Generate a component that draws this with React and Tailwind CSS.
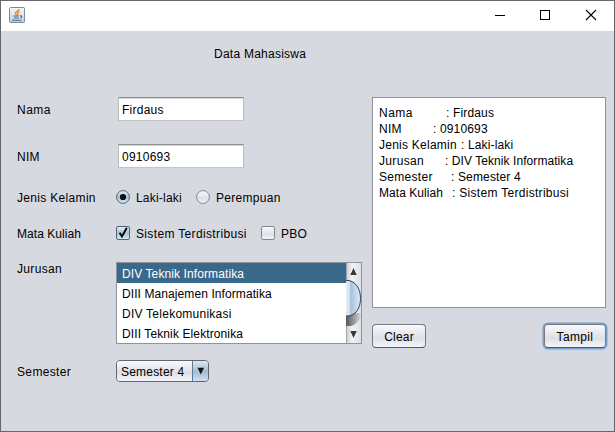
import React from "react";

function JavaIcon() {
  return (
    <svg width="16" height="16" viewBox="0 0 16 16" className="-mt-0.5 block">
      <defs>
        <linearGradient id="javaBg" x1="0" y1="0" x2="0" y2="1">
          <stop offset="0" stopColor="#f6f7f8" />
          <stop offset="1" stopColor="#c3ccd4" />
        </linearGradient>
      </defs>
      <rect x="0.5" y="0.5" width="15" height="15" rx="1" fill="url(#javaBg)" stroke="#7b8a99" />
      <path d="M10.200 2C10 3.800 6.200 4.500 6.500 6.300c.2.800 1.100 1 1 1.900M10.600 4.400C9 5 8.200 5.800 8.800 6.600c.4.600.1 1-.3 1.500" fill="none" stroke="#e8862e" strokeWidth="1.300" />
      <path d="M4.500 9h5.500M5 11h4.800M3 13.200h9.500M11 8.800c2.300-.4 2.300 1.500.2 2.200" fill="none" stroke="#456f94" strokeWidth="1.100" />
    </svg>
  );
}

function TitleBar() {
  return (
    <header className="flex h-[30px] shrink-0 items-center justify-between bg-white pl-2 pr-px">
      <JavaIcon />
      <div className="flex h-full">
        <svg width="46" height="30" viewBox="0 0 46 30" shapeRendering="crispEdges">
          <path d="M20 14.5h10" stroke="#000" />
        </svg>
        <svg width="46" height="30" viewBox="0 0 46 30" shapeRendering="crispEdges">
          <rect x="19.5" y="9.5" width="9" height="9" fill="none" stroke="#000" />
        </svg>
        <svg width="46" height="30" viewBox="0 0 46 30">
          <path d="M19 9l10 10M29 9l-10 10" stroke="#000" strokeWidth="1.1" />
        </svg>
      </div>
    </header>
  );
}

function Field({ label, value, labelClass }) {
  return (
    <div className="flex h-6 items-center">
      <span className={`w-[101px] pt-px ${labelClass}`}>{label}</span>
      <div className="flex h-6 w-[126px] items-center border border-t-[#8c8f94] border-r-[#b9bcc1] border-b-[#c3c5c9] border-l-[#b9bcc1] bg-white pl-[3px] pt-px tracking-[0.25px] shadow-[inset_0_1px_0_#d5d6d8]">
        {value}
      </div>
    </div>
  );
}

function Radio({ checked }) {
  return (
    <svg width="14" height="14" viewBox="0 0 14 14" className="block shrink-0">
      <defs>
        <linearGradient id="radioOn" x1="0" y1="0" x2="0" y2="1">
          <stop offset="0" stopColor="#e9f1f7" />
          <stop offset="0.5" stopColor="#a9bfd1" />
          <stop offset="1" stopColor="#d7eafa" />
        </linearGradient>
        <linearGradient id="radioOff" x1="0" y1="0" x2="0" y2="1">
          <stop offset="0" stopColor="#fafafc" />
          <stop offset="0.6" stopColor="#dfe1e6" />
          <stop offset="1" stopColor="#f5f6fa" />
        </linearGradient>
      </defs>
      <circle cx="7" cy="7" r="6.4" fill={checked ? "url(#radioOn)" : "url(#radioOff)"} stroke={checked ? "#4c657b" : "#83868d"} />
      {checked && <circle cx="7" cy="7" r="3.1" fill="#0a0e12" />}
    </svg>
  );
}

function Check({ checked }) {
  return (
    <svg width="14" height="14" viewBox="0 0 14 14" className="block shrink-0">
      <rect x="0.5" y="0.5" width="13" height="13" rx="1.5" fill={checked ? "url(#radioOn)" : "url(#radioOff)"} stroke={checked ? "#4c657b" : "#83868d"} />
      {checked && <path d="M3.600 6.700l2.400 3.800L10.800 1.800" fill="none" stroke="#000" strokeWidth="1.900" />}
    </svg>
  );
}

function ScrollBar() {
  return (
    <svg width="15" height="80" viewBox="0 0 15 80" className="block shrink-0">
      <defs>
        <linearGradient id="track" x1="0" x2="1" y1="0" y2="0">
          <stop offset="0" stopColor="#c6c8cd" />
          <stop offset="0.4" stopColor="#f2f3f5" />
          <stop offset="1" stopColor="#dddfe4" />
        </linearGradient>
        <linearGradient id="thumb" x1="0" x2="1" y1="0" y2="0">
          <stop offset="0" stopColor="#e6edf4" />
          <stop offset="0.25" stopColor="#d3e0eb" />
          <stop offset="0.32" stopColor="#a9c1d6" />
          <stop offset="1" stopColor="#d9ecfb" />
        </linearGradient>
        <linearGradient id="shade" x1="0" x2="1" y1="0" y2="0">
          <stop offset="0" stopColor="#55575a" />
          <stop offset="1" stopColor="#d4d6da" />
        </linearGradient>
      </defs>
      <rect width="15" height="80" fill="url(#track)" />
      <path d="M0 50h15v4c-3 5-6 8-10 9H0z" fill="url(#shade)" />
      <path d="M0 17.500h2C9 18 14.500 25 14.500 35.500S9 52.500 2 53H0z" fill="url(#thumb)" />
      <path d="M0 17.500h2C9 18 14.500 25 14.500 35.500S9 52.500 2 53H0" fill="none" stroke="#2c465d" />
      <path d="M0.500 0v17M0.500 63v17" stroke="#a1a4aa" />
      <path d="M7.500 5l3.200 7H4.300zM7.500 75l3.200-7H4.300z" fill="#35373a" />
    </svg>
  );
}

const majors = [
  { name: "DIV Teknik Informatika", style: "bg-[#39698a] text-white tracking-[0.1px]" },
  { name: "DIII Manajemen Informatika", style: "tracking-[0.09px]" },
  { name: "DIV Telekomunikasi", style: "tracking-[0.25px]" },
  { name: "DIII Teknik Elektronika", style: "tracking-[0.11px]" },
];

const output = [
  { label: "Nama", value: ": Firdaus", box: "w-[67px] tracking-[0.5px]", text: "tracking-[0.15px]" },
  { label: "NIM", value: ": 0910693", box: "w-[54px] tracking-[0.3px]", text: "tracking-[0.15px]" },
  { label: "Jenis Kelamin", value: ": Laki-laki", box: "w-[82px] tracking-[0.25px]", text: "tracking-[0.15px]" },
  { label: "Jurusan", value: ": DIV Teknik Informatika", box: "w-[66px] tracking-[0.35px]", text: "tracking-[0.07px]" },
  { label: "Semester", value: ": Semester 4", box: "w-[72px] tracking-[0.3px]", text: "tracking-[0.15px]" },
  { label: "Mata Kuliah", value: ": Sistem Terdistribusi", box: "w-[73px] tracking-[0.05px]", text: "tracking-[0.3px]" },
];

const buttonClass =
  "flex h-6 items-center justify-center rounded-[4px] border border-[#777a80] border-b-[#53565c] bg-linear-to-b from-[#fafafc] via-[#dcdfe4] via-60% to-[#f4f6fb] pt-px";

export default function App() {
  return (
    <div className="flex h-[432px] w-[615px] flex-col border border-[#66676b] bg-[#d6d9e0] font-['Liberation_Sans',Arial,sans-serif] text-[12px] leading-4 tracking-[0.2px] text-black">
      <TitleBar />
      <h1 className="mt-[15px] h-4 pl-[213px] tracking-[0.25px]">Data Mahasiswa</h1>
      <main className="flex pt-[35px]">
        <section className="w-[371px] shrink-0 pl-4">
          <Field label="Nama" value="Firdaus" labelClass="tracking-[0.5px]" />
          <div className="h-[23px]" />
          <Field label="NIM" value="0910693" labelClass="tracking-[0.3px]" />
          <div className="mt-[21px] flex h-4 items-center">
            <span className="w-[99px] pt-0.5 tracking-[0.32px]">Jenis Kelamin</span>
            <Radio checked />
            <span className="ml-1.5 w-[60px] pt-0.5">Laki-laki</span>
            <Radio />
            <span className="ml-1.5 pt-0.5 tracking-[0.3px]">Perempuan</span>
          </div>
          <div className="mt-5 flex h-4 items-center">
            <span className="w-[99px] pt-0.5 tracking-[0.05px]">Mata Kuliah</span>
            <Check checked />
            <span className="ml-1.5 w-[125px] pt-0.5 tracking-[0.35px]">Sistem Terdistribusi</span>
            <Check />
            <span className="ml-1.5 pt-0.5">PBO</span>
          </div>
          <div className="mt-[21px] flex">
            <span className="-mt-px w-[99px] shrink-0 tracking-[0.35px]">Jurusan</span>
            <div className="flex h-[82px] w-[246px] border border-[#8f939c]">
              <ul className="flex-1 bg-white">
                {majors.map((m) => (
                  <li key={m.name} className={`h-5 pl-[5px] pt-[3px] ${m.style}`}>
                    {m.name}
                  </li>
                ))}
              </ul>
              <ScrollBar />
            </div>
          </div>
          <div className="mt-4 flex items-center">
            <span className="w-[99px] pt-px tracking-[0.35px]">Semester</span>
            <div className="flex h-[22px] w-[93px] overflow-hidden rounded-[4px] border border-[#62666d]">
              <span className="w-[75px] bg-linear-to-b from-[#fafafc] via-[#dcdfe4] via-60% to-[#f4f6fb] pl-1 pt-[3px]">Semester 4</span>
              <span className="flex flex-1 items-center justify-center border-l border-[#5d7b95] bg-linear-to-b from-[#dce7f0] via-[#a4bcd0] via-55% to-[#cfe3f3]">
                <svg width="8" height="8" viewBox="0 0 8 8">
                  <path d="M0.500 0.800h6.600L3.800 7.500z" fill="#15181b" />
                </svg>
              </span>
            </div>
          </div>
        </section>
        <section className="w-[234px]">
          <div className="h-[211px] border border-[#8f939c] bg-white pl-1.5 pt-[7px]">
            {output.map((line) => (
              <p key={line.label} className="flex whitespace-nowrap">
                <span className={`shrink-0 ${line.box}`}>{line.label}</span>
                <span className={line.text}>{line.value}</span>
              </p>
            ))}
          </div>
          <div className="mt-4 flex justify-between">
            <button className={`${buttonClass} w-[54px]`}>Clear</button>
            <button className={`${buttonClass} w-[62px] tracking-[0.35px] ring-[1.5px] ring-[#73a4d1]`}>Tampil</button>
          </div>
        </section>
      </main>
    </div>
  );
}
